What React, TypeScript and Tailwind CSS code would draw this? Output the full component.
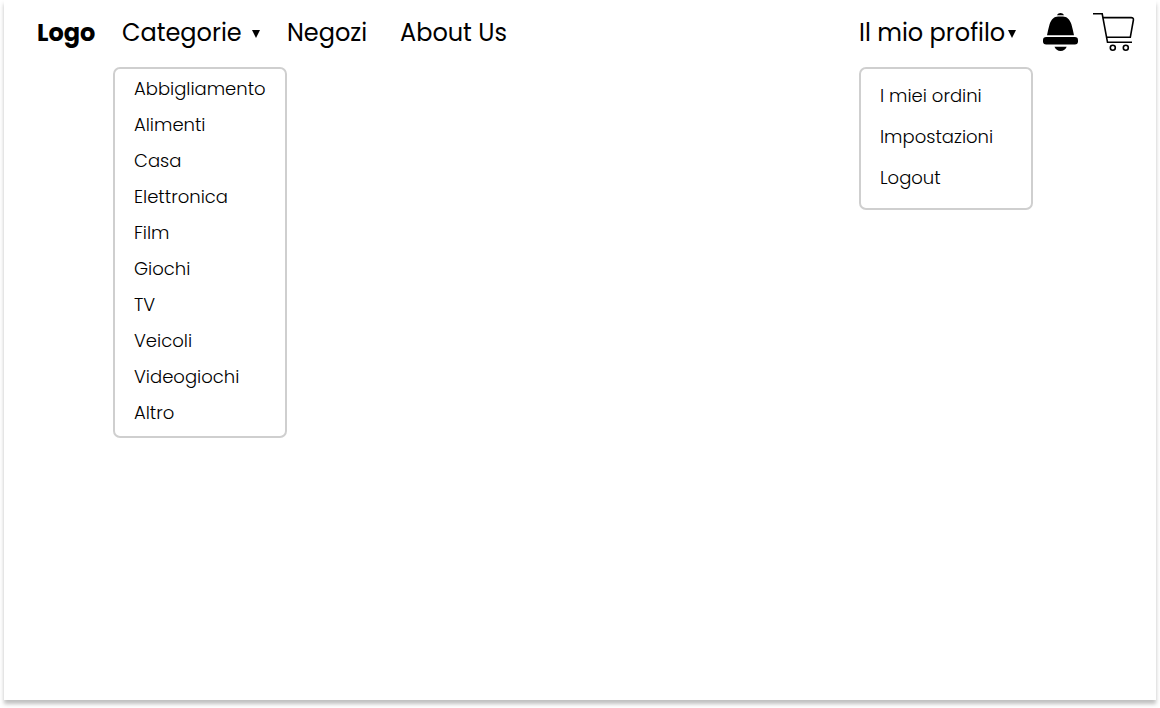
import React from "react";

const categories = [
  "Abbigliamento",
  "Alimenti",
  "Casa",
  "Elettronica",
  "Film",
  "Giochi",
  "TV",
  "Veicoli",
  "Videogiochi",
  "Altro",
];

const profileLinks = ["I miei ordini", "Impostazioni", "Logout"];

function Caret() {
  return (
    <svg viewBox="0 0 8 8" className="mt-0.5 h-2 w-2 shrink-0" aria-hidden="true">
      <path d="M0 0h8L4 8z" fill="currentColor" />
    </svg>
  );
}

function BellIcon() {
  return (
    <svg viewBox="0 0 36 38" className="h-[38px] w-9" fill="currentColor" aria-hidden="true">
      <path d="M14 2.3C14.6.8 16.2 0 17.5 0s2.900.8 3.500 2.300z" />
      <path d="M4 22.300C4.800 18.500 5.500 15 6.600 11.300 8.200 6.300 11.500 3.600 15 3.600h5c3.500 0 6.800 2.700 8.400 7.700 1.100 3.700 1.800 7.200 2.600 11z" />
      <rect x="0" y="24" width="35" height="7.500" rx="3.200" />
      <path d="M11.500 33.800h12.200c-1 2.600-3.200 4.200-6.100 4.200s-5.100-1.600-6.100-4.200z" />
    </svg>
  );
}

function CartIcon() {
  return (
    <svg
      viewBox="0 0 42 38"
      className="h-[38px] w-[42px]"
      fill="none"
      stroke="currentColor"
      strokeWidth="1.600"
      aria-hidden="true"
    >
      <path d="M0 .8h9.200L14.500 29.300H39" />
      <path d="M9.800 4.600h28.400q2.600 0 2.200 2.400L37.300 24.300H13.600" />
      <circle cx="19.800" cy="34.700" r="2.500" />
      <circle cx="32.800" cy="34.700" r="2.500" />
    </svg>
  );
}

export default function App() {
  return (
    <div className="min-h-screen bg-white px-1 pb-2 font-['Poppins','Inter',sans-serif] text-black">
      <div className="min-h-[calc(100vh-8px)] bg-white shadow-[0_4px_4px_rgba(0,0,0,0.25)]">
        <header className="flex h-[66px] items-center justify-between pr-[21px] pl-[33px] text-2xl leading-8">
          <nav className="flex items-center" aria-label="Principale">
            <a href="#" className="w-[85px] font-bold">
              Logo
            </a>
            <div className="relative w-[165px]">
              <button type="button" aria-expanded="true" className="flex items-center gap-2.5">
                Categorie
                <Caret />
              </button>
              <ul className="absolute top-[50px] -left-[9px] w-[174px] rounded-[7px] border-2 border-[#cfcfcf] bg-white pt-[2px] pb-[5px] pl-[19px] text-lg font-light">
                {categories.map((name) => (
                  <li key={name} className="flex h-9 items-center">
                    <a href="#">{name}</a>
                  </li>
                ))}
              </ul>
            </div>
            <a href="#" className="w-[113px]">
              Negozi
            </a>
            <a href="#">About Us</a>
          </nav>
          <div className="flex items-center">
            <div className="relative w-[184px]">
              <button type="button" aria-expanded="true" className="flex items-center gap-[3px] whitespace-nowrap">
                Il mio profilo
                <Caret />
              </button>
              <ul className="absolute top-[50px] left-0 w-[174px] rounded-[7px] border-2 border-[#cfcfcf] bg-white pt-[6px] pb-[10px] pl-[19px] text-lg font-light">
                {profileLinks.map((name) => (
                  <li key={name} className="flex h-[41px] items-center">
                    <a href="#">{name}</a>
                  </li>
                ))}
              </ul>
            </div>
            <button type="button" aria-label="Notifiche" className="mr-[14px] pb-0.5">
              <BellIcon />
            </button>
            <button type="button" aria-label="Carrello" className="pb-0.5">
              <CartIcon />
            </button>
          </div>
        </header>
      </div>
    </div>
  );
}
